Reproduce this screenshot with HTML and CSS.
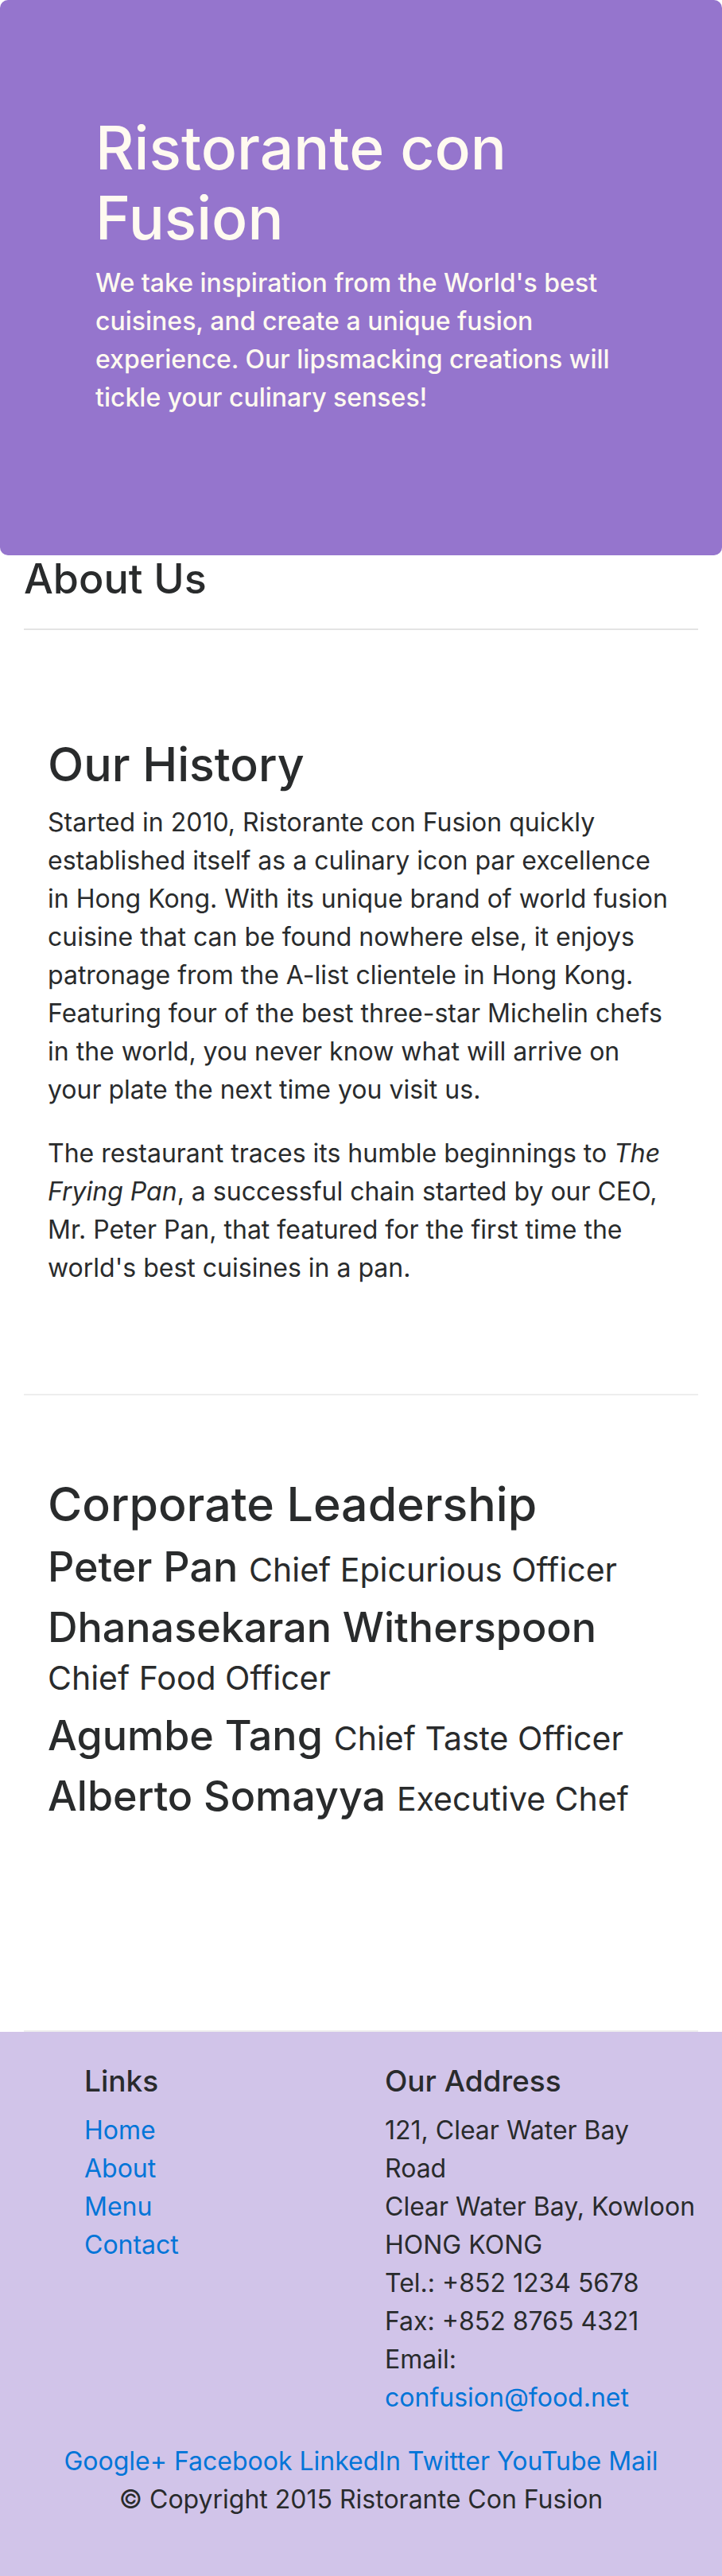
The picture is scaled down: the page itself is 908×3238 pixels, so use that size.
FILE: index.html
```html
<!DOCTYPE html>
<html lang="en">
<head>
<meta charset="utf-8">
<meta name="viewport" content="width=device-width, initial-scale=1">
<title>Ristorante Con Fusion: About Us</title>
<link rel="stylesheet" href="styles.css">
</head>
<body>
<header class="jumbotron">
  <h1>Ristorante con Fusion</h1>
  <p>We take inspiration from the World's best cuisines, and create a unique fusion experience. Our lipsmacking creations will tickle your culinary senses!</p>
</header>
<main class="container">
  <h3 class="page-title">About Us</h3>
  <section class="row-content history">
    <h2>Our History</h2>
    <p>Started in 2010, Ristorante con Fusion quickly established itself as a culinary icon par excellence in Hong Kong. With its unique brand of world fusion cuisine that can be found nowhere else, it enjoys patronage from the A-list clientele in Hong Kong. Featuring four of the best three-star Michelin chefs in the world, you never know what will arrive on your plate the next time you visit us.</p>
    <p>The restaurant traces its humble beginnings to <em>The Frying Pan</em>, a successful chain started by our CEO, Mr. Peter Pan, that featured for the first time the world's best cuisines in a pan.</p>
  </section>
  <section class="row-content leadership">
    <h2>Corporate Leadership</h2>
    <h3>Peter Pan <small>Chief Epicurious Officer</small></h3>
    <h3>Dhanasekaran Witherspoon <small>Chief Food Officer</small></h3>
    <h3>Agumbe Tang <small>Chief Taste Officer</small></h3>
    <h3>Alberto Somayya <small>Executive Chef</small></h3>
  </section>
</main>
<footer class="footer">
  <div class="footer-columns">
    <nav class="links">
      <h5>Links</h5>
      <ul>
        <li><a href="#">Home</a></li>
        <li><a href="#">About</a></li>
        <li><a href="#">Menu</a></li>
        <li><a href="#">Contact</a></li>
      </ul>
    </nav>
    <div class="contact">
      <h5>Our Address</h5>
      <address>121, Clear Water Bay Road<br>Clear Water Bay, Kowloon<br>HONG KONG<br>Tel.: +852 1234 5678<br>Fax: +852 8765 4321<br>Email: <a href="mailto:confusion@food.net">confusion@food.net</a></address>
    </div>
  </div>
  <div class="social"><a href="#">Google+</a> <a href="#">Facebook</a> <a href="#">LinkedIn</a> <a href="#">Twitter</a> <a href="#">YouTube</a> <a href="#">Mail</a></div>
  <p class="copyright">© Copyright 2015 Ristorante Con Fusion</p>
</footer>
</body>
</html>
```
FILE: styles.css
```css
* { box-sizing: border-box; }
body {
  margin: 0;
  background: #fff;
  color: #292b2c;
  font-family: Inter, "Liberation Sans", sans-serif;
  font-size: 32px;
  line-height: 48px;
}
h1, h2, h3, h5 { margin: 0; font-weight: 500; }
h1 { margin-bottom: 14px; font-size: 75px; line-height: 88px; }
h2 { margin-bottom: 14px; font-size: 59px; line-height: 70px; }
h3 { margin-bottom: 16px; font-size: 52px; line-height: 60px; }
h5 { margin-bottom: 16px; font-size: 37px; line-height: 44px; }
p { margin: 0 0 32px; }
a { color: #0275d8; text-decoration: none; }
small { font-size: 41px; font-weight: 400; line-height: 1; }
.jumbotron {
  padding: 142px 120px;
  border-radius: 10px;
  background: #9575cd;
  color: floralwhite;
}
.jumbotron p { font-weight: 500; }
.container { padding: 0 30px; }
.page-title {
  margin: 0;
  padding-bottom: 32px;
  border-bottom: 2px solid #e4e4e4;
}
.row-content {
  padding: 102px 30px;
  border-bottom: 2px solid #eee;
}
.history { padding-top: 134px; }
.leadership { padding-bottom: 248px; }
.footer { padding: 40px 30px; background: #d1c4e9; }
.footer-columns {
  display: grid;
  grid-template-columns: 1fr 1fr;
  margin-bottom: 32px;
}
.links { padding-left: 76px; }
.contact { padding: 0 2px 0 30px; }
.footer ul { margin: 0; padding: 0; list-style: none; }
address { font-style: normal; }
.social, .copyright { text-align: center; }
```
